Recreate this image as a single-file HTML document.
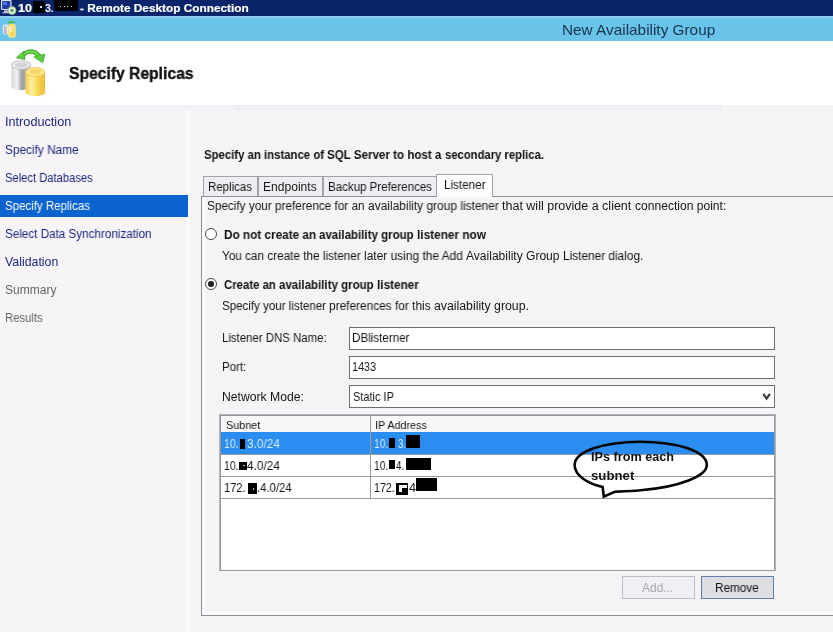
<!DOCTYPE html>
<html><head><meta charset="utf-8"><title>New Availability Group</title>
<style>
*{box-sizing:border-box;margin:0;padding:0}
html,body{width:833px;height:632px;overflow:hidden;background:#f5f3f6;font-family:"Liberation Sans",sans-serif}
.a{position:absolute}
.t{will-change:transform;position:absolute;white-space:nowrap;line-height:1.2;transform-origin:0 0;display:block}
.k{position:absolute;background:#000}

</style></head><body>
<!-- RDC title bar -->
<div class="a" style="left:0;top:0;width:833px;height:16px;background:#0a246a"></div>
<div class="a" style="left:0;top:16px;width:833px;height:2px;background:#8ccdf0"></div>
<!-- window caption -->
<div class="a" style="left:0;top:18px;width:833px;height:23px;background:#6ac4ea"></div>
<!-- white header -->
<div class="a" style="left:0;top:41px;width:833px;height:64px;background:#ffffff"></div>

<!-- RDC icon -->
<svg class="a" style="left:0;top:0" width="18" height="16" viewBox="0 0 18 16">
<rect x="1.5" y="0.5" width="9.5" height="9" rx="1" fill="#1f3fb0" stroke="#dfe6f5" stroke-width="1.2"/>
<rect x="3" y="2" width="4" height="3" fill="#4f74dc"/>
<rect x="4" y="10.5" width="5" height="1.6" fill="#c9d2e8"/>
<rect x="2.5" y="12" width="8" height="1.4" fill="#aab6d6"/>
<circle cx="12" cy="10.5" r="4" fill="#e8f3e0" stroke="#7da86a" stroke-width="0.8"/>
<path d="M10 10.5 L12 8.6 L12 12.4 Z M14.2 10.5 L12.4 8.6 L12.4 12.4 Z" fill="#3f8f3a"/>
</svg>
<!-- caption small icon -->
<svg class="a" style="left:2px;top:20px" width="15" height="19" viewBox="0 0 15 19">
<path d="M6.200 3 C7.500 1.600 11 1.600 12.300 3" fill="none" stroke="#4fb84a" stroke-width="2"/>
<rect x="0.8" y="4.5" width="6" height="10" rx="2" fill="#e6e6ea"/>
<rect x="2" y="6" width="2.5" height="8" fill="#b9b9c2"/>
<rect x="6" y="3.800" width="7.900" height="14" rx="2.800" fill="#f3df78"/>
<rect x="7" y="6" width="3" height="10.500" fill="#f9efaa"/>
<ellipse cx="10" cy="14" rx="2.500" ry="2" fill="#f6d24e"/>
</svg>
<!-- header icon -->
<svg class="a" style="left:8px;top:46px" width="46" height="56" viewBox="8 46 46 56">
<defs>
<linearGradient id="gg" x1="0" x2="1" y1="0" y2="0"><stop offset="0" stop-color="#d9d9dc"/><stop offset="0.3" stop-color="#f2f2f4"/><stop offset="0.55" stop-color="#9d9da3"/><stop offset="1" stop-color="#c4c4c9"/></linearGradient>
<linearGradient id="gy" x1="0" x2="1" y1="0" y2="0"><stop offset="0" stop-color="#f3cf45"/><stop offset="0.3" stop-color="#fdf0a0"/><stop offset="0.65" stop-color="#f6d54e"/><stop offset="1" stop-color="#e9b93a"/></linearGradient>
<radialGradient id="gs" cx="0.5" cy="0.5" r="0.5"><stop offset="0" stop-color="#bdbdc4" stop-opacity="0.8"/><stop offset="1" stop-color="#ffffff" stop-opacity="0"/></radialGradient>
</defs>
<ellipse cx="38" cy="93" rx="14" ry="5" fill="url(#gs)"/>
<path d="M11.3 65 L11.3 86 C11.3 91.500 30.800 91.500 30.800 86 L30.800 65 Z" fill="url(#gg)"/>
<ellipse cx="21.05" cy="65" rx="9.75" ry="4.3" fill="#e6e6ea" stroke="#bcbcc2" stroke-width="0.8"/>
<ellipse cx="21.05" cy="65" rx="6" ry="2.3" fill="#d2d2d8"/>
<path d="M25.5 72 L25.5 91.5 C25.5 97.500 45 97.500 45 91.500 L45 72 Z" fill="url(#gy)"/>
<ellipse cx="35.25" cy="72" rx="9.75" ry="4.4" fill="#fbe88c" stroke="#f0bf52" stroke-width="0.8"/>
<ellipse cx="35.25" cy="71.600" rx="6" ry="2.300" fill="#f7d26a"/>
<path d="M22 57 C26.500 49.500 35.500 49.500 40.500 58" fill="none" stroke="#43ad2e" stroke-width="4.400"/>
<path d="M22 57 C26.500 49.500 35.500 49.500 40.500 58" fill="none" stroke="#72d856" stroke-width="2"/>
<path d="M16.300 57.800 L23.500 51.300 L25 59.600 Z" fill="#5fca44" stroke="#43ad2e" stroke-width="0.800"/>
<path d="M33.800 57 L45 54 L42.600 62.800 Z" fill="#5fca44" stroke="#43ad2e" stroke-width="0.800"/>
</svg>
<!-- sidebar + main -->
<div class="a" style="left:0;top:105px;width:188px;height:527px;background:#f6f4f7"></div>
<div class="a" style="left:188px;top:105px;width:645px;height:527px;background:#f5f3f6"></div>
<div class="a" style="left:186.500px;top:110px;width:3.500px;height:522px;background:#faf9fb"></div>
<div class="a" style="left:0;top:105px;width:722px;height:5px;background:#efedf1"></div>
<div class="a" style="left:0;top:105px;width:236px;height:5px;background:#f3f1f5"></div>
<!-- selected nav -->
<div class="a" style="left:0;top:195px;width:188px;height:22px;background:#0b63cd"></div>

<!-- tab panel -->
<div class="a" style="left:201px;top:196px;width:640px;height:420px;border:1px solid #8e8e93;background:#f5f3f6"></div>
<div class="a" style="left:202px;top:612px;width:631px;height:3px;background:#fcfbfd"></div>
<div class="a" style="left:202px;top:197px;width:4px;height:418px;background:#f9f8fa"></div>
<!-- tabs -->
<div class="a" style="left:203px;top:176px;width:234px;height:20px;border:1px solid #a2a2a7;border-bottom:none;background:#efedf1"></div>
<div class="a" style="left:257px;top:177px;width:2px;height:19px;background:#a2a2a7"></div>
<div class="a" style="left:321.500px;top:177px;width:2px;height:19px;background:#a2a2a7"></div>
<div class="a" style="left:436px;top:174px;width:57px;height:23px;border:1px solid #a2a2a7;border-bottom:none;background:#fdfcfe"></div>

<!-- radios -->
<div class="a" style="left:205px;top:228px;width:12px;height:12px;border-radius:50%;border:1px solid #4a4a4a;background:#fff"></div>
<div class="a" style="left:205px;top:278px;width:12px;height:12px;border-radius:50%;border:1px solid #4a4a4a;background:#fff"></div>
<div class="a" style="left:208.200px;top:281.200px;width:5.600px;height:5.600px;border-radius:50%;background:#222"></div>

<!-- inputs -->
<div class="a" style="left:349px;top:327px;width:426px;height:23px;border:1px solid #6e6e6e;background:#fff"></div>
<div class="a" style="left:349px;top:356px;width:426px;height:23px;border:1px solid #6e6e6e;background:#fff"></div>
<div class="a" style="left:349px;top:385px;width:426px;height:23px;border:1px solid #6e6e6e;background:#fff"></div>
<svg class="a" style="left:757px;top:389px" width="16" height="14" viewBox="757 389 16 14"><path d="M763.300 394 L766.600 398.600 L769.900 394" fill="none" stroke="#3c3c3c" stroke-width="2.200"/></svg>

<!-- grid -->
<div class="a" style="left:219px;top:414px;width:556.500px;height:157px;border:1px solid #b4b4b9;background:#fff"></div>
<div class="a" style="left:220px;top:415px;width:554.500px;height:155.500px;border:1px solid #96969b;background:#fff"></div>
<div class="a" style="left:221px;top:416px;width:552.500px;height:16px;background:#f8f7fa"></div>
<div class="a" style="left:221px;top:432px;width:552.500px;height:22px;background:#2b8df0"></div>
<div class="a" style="left:221px;top:453.800px;width:552.500px;height:1px;background:#9a9a9f"></div>
<div class="a" style="left:221px;top:475.800px;width:552.500px;height:1px;background:#9a9a9f"></div>
<div class="a" style="left:221px;top:497.800px;width:552.500px;height:1px;background:#9a9a9f"></div>
<div class="a" style="left:369.600px;top:416px;width:1px;height:82px;background:#9a9a9f"></div>

<!-- redactions -->
<div class="k" style="left:33.200px;top:0.500px;width:12px;height:12px"></div><div class="a" style="left:40.400px;top:6.400px;width:1.200px;height:1.200px;background:#ddd"></div>
<div class="k" style="left:53.800px;top:0;width:24.200px;height:11.200px"></div><div class="a" style="left:60px;top:5.800px;width:1.200px;height:1.200px;background:#ddd"></div><div class="a" style="left:63.500px;top:5.800px;width:1.200px;height:1.200px;background:#ddd"></div><div class="a" style="left:67px;top:5.800px;width:1.200px;height:1.200px;background:#ddd"></div><div class="a" style="left:70.500px;top:5.800px;width:1.200px;height:1.200px;background:#ddd"></div>
<div class="k" style="left:240.300px;top:439.200px;width:4.900px;height:9.500px"></div>
<div class="k" style="left:389.200px;top:438.300px;width:5.500px;height:9.400px"></div>
<div class="k" style="left:406.200px;top:435px;width:13.600px;height:13.300px"></div>
<div class="k" style="left:239.200px;top:461.500px;width:8.300px;height:8px"></div><div class="a" style="left:243.400px;top:465px;width:1.400px;height:1.400px;background:#ccc"></div>
<div class="k" style="left:389.200px;top:460.100px;width:5.500px;height:8.900px"></div>
<div class="k" style="left:406.200px;top:458.300px;width:24.900px;height:11.400px"></div>
<div class="k" style="left:247.500px;top:483.300px;width:9.900px;height:10.400px"></div><div class="a" style="left:252.500px;top:487.500px;width:1.600px;height:2.500px;background:#ccc"></div>
<div class="k" style="left:396.400px;top:483.200px;width:11.600px;height:11.600px"></div>
<div class="a" style="left:398.800px;top:485.400px;width:8px;height:2.200px;background:#f4f4f4"></div><div class="a" style="left:398.800px;top:485.400px;width:3.200px;height:6.600px;background:#f4f4f4"></div>
<div class="k" style="left:416.200px;top:478.200px;width:20.800px;height:13.300px"></div>

<!-- buttons -->
<div class="a" style="left:622px;top:576px;width:73px;height:23px;border:1px solid #bdbdc2;background:#f1eff3"></div>
<div class="a" style="left:701px;top:576px;width:73px;height:23px;border:1px solid #5f7fa6;background:#dddde3"></div>

<!-- balloon -->
<svg class="a" style="left:565px;top:435px" width="155" height="70" viewBox="565 435 155 70">
<path d="M602.600 486.900 C589 484 574.600 476 574.600 465 C574.600 451.500 604 441.700 640 441.700 C678 441.700 706.800 451.500 706.800 465 C706.800 476 680 487 640.700 490.300 C630 491.300 620 491.500 614.700 491.700 L603.800 496.600 Z" fill="none" stroke="#060606" stroke-width="2.600" stroke-linejoin="miter"/>
</svg>

<div class="t" id="rdc1" style="-webkit-text-stroke:0.2px #fff;left:18.3px;top:1.70px;font-size:11px;color:#fff;font-weight:bold;transform:scaleX(1.1429)">10</div>
<div class="t" id="rdc2" style="left:45.3px;top:1.70px;font-size:11px;color:#fff;font-weight:bold;transform:scaleX(0.9361)">3.</div>
<div class="t" id="rdc3" style="-webkit-text-stroke:0.2px #fff;left:79.6px;top:1.70px;font-size:11px;color:#fff;font-weight:bold;transform:scaleX(1.0740)">- Remote Desktop Connection</div>
<div class="t" id="ttl" style="left:561.6px;top:20.70px;font-size:15px;color:#17324c;transform:scaleX(1.0227)">New Availability Group</div>
<div class="t" id="hd" style="-webkit-text-stroke:0.35px #101010;left:68.6px;top:64.10px;font-size:16px;color:#101010;font-weight:bold;transform:scaleX(0.9790)">Specify Replicas</div>
<div class="t" id="n1" style="left:4.6px;top:115.10px;font-size:12px;color:#1c2880;transform:scaleX(1.0571)">Introduction</div>
<div class="t" id="n2" style="left:4.6px;top:143.10px;font-size:12px;color:#1c2880;transform:scaleX(0.9866)">Specify Name</div>
<div class="t" id="n3" style="left:4.6px;top:171.10px;font-size:12px;color:#1c2880;transform:scaleX(0.9324)">Select Databases</div>
<div class="t" id="n4" style="left:4.6px;top:199.10px;font-size:12px;color:#ffffff;transform:scaleX(0.9581)">Specify Replicas</div>
<div class="t" id="n5" style="left:4.6px;top:227.10px;font-size:12px;color:#1c2880;transform:scaleX(0.9718)">Select Data Synchronization</div>
<div class="t" id="n6" style="left:4.6px;top:255.10px;font-size:12px;color:#1c2880;transform:scaleX(1.0284)">Validation</div>
<div class="t" id="n7" style="left:4.6px;top:283.10px;font-size:12px;color:#666666;transform:scaleX(1.0011)">Summary</div>
<div class="t" id="n8" style="left:4.6px;top:311.10px;font-size:12px;color:#666666;transform:scaleX(0.9421)">Results</div>
<div class="t" id="h2a" style="left:203.7px;top:147.80px;font-size:12px;color:#101010;font-weight:bold;transform:scaleX(0.9471)">Specify an instance of</div>
<div class="t" id="h2b" style="left:327.1px;top:147.80px;font-size:12px;color:#101010;font-weight:bold;transform:scaleX(0.9655)">SQL Server to host a</div>
<div class="t" id="h2c" style="left:444.7px;top:147.80px;font-size:12px;color:#101010;font-weight:bold;transform:scaleX(0.9384)">secondary replica.</div>
<div class="t" id="t1" style="left:208.3px;top:180.20px;font-size:12px;color:#151515;transform:scaleX(0.9559)">Replicas</div>
<div class="t" id="t2" style="left:263.3px;top:180.20px;font-size:12px;color:#151515;transform:scaleX(1.0061)">Endpoints</div>
<div class="t" id="t3" style="left:328.3px;top:180.20px;font-size:12px;color:#151515;transform:scaleX(0.9624)">Backup Preferences</div>
<div class="t" id="t4" style="left:443.7px;top:178.00px;font-size:12px;color:#151515;transform:scaleX(0.9742)">Listener</div>
<div class="t" id="p1a" style="left:207.1px;top:198.60px;font-size:12px;color:#151515;transform:scaleX(0.9803)">Specify your preference for an</div>
<div class="t" id="p1b" style="left:368.1px;top:198.60px;font-size:12px;color:#151515;transform:scaleX(0.9954)">availability group listener</div>
<div class="t" id="p1c" style="left:502.3px;top:198.60px;font-size:12px;color:#151515;transform:scaleX(1.0422)">that will provide a client</div>
<div class="t" id="p1d" style="left:635.0px;top:198.60px;font-size:12px;color:#151515;transform:scaleX(1.0062)">connection point:</div>
<div class="t" id="r1a" style="left:223.9px;top:228.20px;font-size:12px;color:#101010;font-weight:bold;transform:scaleX(0.9795)">Do not create an</div>
<div class="t" id="r1b" style="left:319.3px;top:228.20px;font-size:12px;color:#101010;font-weight:bold;transform:scaleX(0.9594)">availability group</div>
<div class="t" id="r1c" style="left:417.2px;top:228.20px;font-size:12px;color:#101010;font-weight:bold;transform:scaleX(0.9855)">listener now</div>
<div class="t" id="r1sa" style="left:221.9px;top:248.70px;font-size:12px;color:#151515;transform:scaleX(0.9791)">You can create the listener</div>
<div class="t" id="r1sb" style="left:364.0px;top:248.70px;font-size:12px;color:#151515;transform:scaleX(0.9949)">later using the Add</div>
<div class="t" id="r1sc" style="left:466.3px;top:248.70px;font-size:12px;color:#151515;transform:scaleX(1.0035)">Availability Group</div>
<div class="t" id="r1sd" style="left:563.2px;top:248.70px;font-size:12px;color:#151515;transform:scaleX(0.9866)">Listener dialog.</div>
<div class="t" id="r2a" style="left:223.9px;top:278.00px;font-size:12px;color:#101010;font-weight:bold;transform:scaleX(0.9469)">Create an</div>
<div class="t" id="r2b" style="left:279.0px;top:278.00px;font-size:12px;color:#101010;font-weight:bold;transform:scaleX(0.9594)">availability group</div>
<div class="t" id="r2c" style="left:376.9px;top:278.00px;font-size:12px;color:#101010;font-weight:bold;transform:scaleX(0.9816)">listener</div>
<div class="t" id="r2sa" style="left:221.5px;top:298.50px;font-size:12px;color:#151515;transform:scaleX(0.9625)">Specify your listener</div>
<div class="t" id="r2sb" style="left:328.8px;top:298.50px;font-size:12px;color:#151515;transform:scaleX(0.9891)">preferences for this</div>
<div class="t" id="r2sc" style="left:433.6px;top:298.50px;font-size:12px;color:#151515;transform:scaleX(1.0235)">availability group.</div>
<div class="t" id="l1" style="left:222.0px;top:330.90px;font-size:12px;color:#151515;transform:scaleX(0.9514)">Listener DNS Name:</div>
<div class="t" id="l2" style="left:222.0px;top:360.00px;font-size:12px;color:#151515;transform:scaleX(0.9588)">Port:</div>
<div class="t" id="l3" style="left:222.0px;top:390.20px;font-size:12px;color:#151515;transform:scaleX(1.0161)">Network Mode:</div>
<div class="t" id="v1" style="left:351.8px;top:330.90px;font-size:12px;color:#151515;transform:scaleX(0.9687)">DBlisterner</div>
<div class="t" id="v2" style="left:351.8px;top:360.00px;font-size:12px;color:#151515;transform:scaleX(0.9025)">1433</div>
<div class="t" id="v3" style="left:353.0px;top:390.20px;font-size:12px;color:#151515;transform:scaleX(0.9152)">Static IP</div>
<div class="t" id="g1" style="left:226.3px;top:418.60px;font-size:11.5px;color:#151515;transform:scaleX(0.9409)">Subnet</div>
<div class="t" id="g2" style="left:374.9px;top:418.60px;font-size:11.5px;color:#151515;transform:scaleX(0.9331)">IP Address</div>
<div class="t" id="a1" style="left:224.3px;top:436.70px;font-size:12px;color:#d4eeff;transform:scaleX(0.8689)">10.</div>
<div class="t" id="a2" style="left:247.3px;top:436.70px;font-size:12px;color:#d4eeff;transform:scaleX(0.9828)">3.0/24</div>
<div class="t" id="a3" style="left:374.3px;top:436.70px;font-size:12px;color:#d4eeff;transform:scaleX(0.8569)">10.</div>
<div class="t" id="a4" style="left:398.1px;top:436.70px;font-size:12px;color:#d4eeff;transform:scaleX(0.7988)">3.</div>
<div class="t" id="b1" style="left:224.3px;top:458.50px;font-size:12px;color:#151515;transform:scaleX(0.8689)">10.</div>
<div class="t" id="b2" style="left:247.3px;top:458.50px;font-size:12px;color:#151515;transform:scaleX(0.9828)">4.0/24</div>
<div class="t" id="b3" style="left:374.3px;top:458.50px;font-size:12px;color:#151515;transform:scaleX(0.8569)">10.</div>
<div class="t" id="b4" style="left:396.4px;top:458.50px;font-size:12px;color:#151515;transform:scaleX(0.8187)">4.</div>
<div class="t" id="c1" style="left:224.3px;top:480.80px;font-size:12px;color:#151515;transform:scaleX(0.9247)">172.</div>
<div class="t" id="c2" style="left:257.2px;top:480.80px;font-size:12px;color:#151515;transform:scaleX(0.9454)">.4.0/24</div>
<div class="t" id="c3" style="left:374.3px;top:480.80px;font-size:12px;color:#151515;transform:scaleX(0.8862)">172.</div>
<div class="t" id="c4" style="left:408.6px;top:480.80px;font-size:12px;color:#151515;transform:scaleX(1.0617)">4</div>
<div class="t" id="ba" style="left:641.8px;top:580.90px;font-size:12px;color:#a9a9ad;transform:scaleX(0.9949)">Add...</div>
<div class="t" id="br" style="left:714.8px;top:580.90px;font-size:12px;color:#151515;transform:scaleX(0.9801)">Remove</div>
<div class="t" id="bl1" style="left:591.0px;top:450.00px;font-size:12.5px;color:#141414;font-weight:bold;transform:scaleX(1.0124)">IPs from each</div>
<div class="t" id="bl2" style="left:591.0px;top:468.70px;font-size:12.5px;color:#141414;font-weight:bold;transform:scaleX(1.0565)">subnet</div>
</body></html>
